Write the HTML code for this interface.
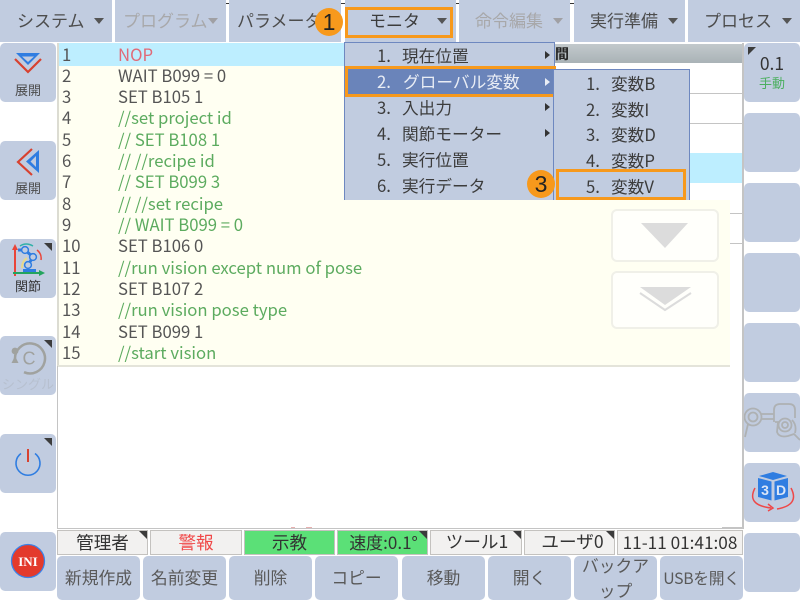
<!DOCTYPE html>
<html lang="ja"><head><meta charset="utf-8"><style>
html,body{margin:0;padding:0;background:#fff}
#r{position:relative;width:802px;height:600px;overflow:hidden;background:#fff;font-family:"Noto Sans CJK JP","Liberation Sans",sans-serif;color:#4c4c4c;font-size:17px;filter:blur(.35px)}
#r div,#r svg{position:absolute}
.b{background:#c1cce0;border-radius:5px;text-align:center;box-sizing:border-box}
.t{background:#c1cce0;height:42px;top:0;line-height:40px;box-sizing:border-box;white-space:nowrap}
.t span{position:absolute;top:0;white-space:nowrap}
.ar{width:0;height:0;border-left:5px solid transparent;border-right:5px solid transparent;border-top:6px solid #555;top:18px}
.n{left:62px;width:40px;height:21px;line-height:21px;font-size:16.7px;color:#555}
.c{left:118px;width:300px;height:21px;line-height:21px;font-size:16.7px;white-space:nowrap;color:#555}
.g{color:#5cab5f}
.m{left:344px;width:210px;height:26px;line-height:26px;color:#3c3c3c;white-space:nowrap;font-size:16.7px}
.m span{position:absolute;top:0;white-space:nowrap}
.ra{left:201px;top:9px;width:0;height:0;border-top:4px solid transparent;border-bottom:4px solid transparent;border-left:5px solid #333}
.s{top:530px;height:25px;line-height:23px;background:#f2f1f0;border:1px solid #c4c2bf;box-sizing:border-box;text-align:center;font-size:17.6px;color:#333;white-space:nowrap}
.gr{background:#5be077}
.f{top:556px;height:44px;line-height:43px;background:#c1cce0;border-radius:5px;text-align:center;color:#595959;font-size:16.8px;white-space:nowrap}
.cn{width:0;height:0;border-top:8px solid #3c3c3c;border-left:8px solid transparent;right:0;top:0}
.cl{width:0;height:0;border-top:8px solid #3c3c3c;border-right:8px solid transparent;left:4px;top:4px}
.o{width:28px;height:28px;border-radius:50%;background:#f7991c;color:#222;font-family:"Liberation Sans",sans-serif;font-size:23px;line-height:28px;text-align:center}
.l{height:1px;background:#c4c4c4}
.sl{left:0;width:56px;line-height:20px;font-size:13px}
</style></head><body><div id="r">

<div style="left:216px;top:0;width:367px;height:4px;background:#fff;border:1px solid #333;border-top:0;box-sizing:border-box"></div>
<div style="left:472px;top:0;width:1px;height:3px;background:#333"></div>

<div class="t" style="left:0;width:112px"><span style="left:17px">システム</span><div class="ar" style="left:94px"></div></div>
<div class="t" style="left:115px;width:111px;color:#a8a8aa"><span style="left:8px">プログラム</span><div class="ar" style="left:93px;border-top-color:#a0a0a4"></div></div>
<div class="t" style="left:229px;width:112px"><span style="left:8px">パラメータ</span></div>
<div class="t" style="left:345px;width:111px;color:#3c3c3c"><span style="left:24px">モニタ</span><div class="ar" style="left:92px"></div></div>
<div style="left:345px;top:7px;width:108px;height:31px;border:3px solid #f7991c;box-sizing:border-box"></div>
<div class="t" style="left:459px;width:111px;color:#a8a8aa"><span style="left:16px">命令編集</span><div class="ar" style="left:94px;border-top-color:#a0a0a4"></div></div>
<div class="t" style="left:574px;width:111px"><span style="left:16px">実行準備</span><div class="ar" style="left:94px"></div></div>
<div class="t" style="left:688px;width:112px"><span style="left:16px">プロセス</span><div class="ar" style="left:94px"></div></div>

<!-- editor -->
<div style="left:58px;top:43px;width:290px;height:160px;background:#fffff2"></div>
<div style="left:58px;top:200px;width:672px;height:166px;background:#fffff2"></div>
<div style="left:58px;top:43px;width:288px;height:23px;background:#bdeeff"></div>
<div style="left:57px;top:43px;width:2px;height:323px;background:#dcdcd2"></div>
<div style="left:58px;top:365px;width:672px;height:2px;background:#e4e4da"></div>
<div style="left:57px;top:366px;width:1px;height:163px;background:#c4c4c4"></div>
<div style="left:742px;top:43px;width:2px;height:486px;background:#c4c4c4"></div>
<div style="left:57px;top:528px;width:686px;height:1px;background:#c4c4c4"></div>
<div style="left:722px;top:527px;width:21px;height:1px;background:#c4c4c4"></div>
<div style="left:291px;top:527px;width:4px;height:1px;background:#e8b0b0"></div>
<div style="left:306px;top:527px;width:6px;height:1px;background:#e8b0b0"></div>

<!-- back panel -->
<div style="left:554px;top:44px;width:188px;height:19px;background:linear-gradient(#c2c9cc,#a9b2b6)"></div>
<div style="left:555px;top:44px;width:16px;height:20px;line-height:20px;font-size:14px;color:#222;font-weight:bold">間</div>
<div class="l" style="left:554px;top:93px;width:188px"></div>
<div class="l" style="left:554px;top:123px;width:188px"></div>
<div style="left:554px;top:153px;width:188px;height:30px;background:#bdeeff"></div>
<div class="l" style="left:730px;top:213px;width:12px"></div>
<div class="l" style="left:730px;top:243px;width:12px"></div>

<div class="n" style="top:43.5px">1</div><div class="c" style="top:43.5px;color:#e06a78">NOP</div>
<div class="n" style="top:64.5px">2</div><div class="c" style="top:64.5px">WAIT B099 = 0</div>
<div class="n" style="top:86px">3</div><div class="c" style="top:86px">SET B105 1</div>
<div class="n" style="top:107px">4</div><div class="c g" style="top:107px">//set project id</div>
<div class="n" style="top:129px">5</div><div class="c g" style="top:129px">// SET B108 1</div>
<div class="n" style="top:150px">6</div><div class="c g" style="top:150px">// //recipe id</div>
<div class="n" style="top:171px">7</div><div class="c g" style="top:171px">// SET B099 3</div>
<div class="n" style="top:193px">8</div><div class="c g" style="top:193px">// //set recipe</div>
<div class="n" style="top:214px">9</div><div class="c g" style="top:214px">// WAIT B099 = 0</div>
<div class="n" style="top:235px">10</div><div class="c" style="top:235px">SET B106 0</div>
<div class="n" style="top:257px">11</div><div class="c g" style="top:257px">//run vision except num of pose</div>
<div class="n" style="top:278px">12</div><div class="c" style="top:278px">SET B107 2</div>
<div class="n" style="top:299px">13</div><div class="c g" style="top:299px">//run vision pose type</div>
<div class="n" style="top:321px">14</div><div class="c" style="top:321px">SET B099 1</div>
<div class="n" style="top:342px">15</div><div class="c g" style="top:342px">//start vision</div>

<!-- faded arrow buttons -->
<svg style="left:610px;top:208px" width="110" height="122" viewBox="0 0 110 122">
<rect x="2" y="2" width="106" height="51" rx="5" fill="#fffffb" stroke="#f0f0e8" stroke-width="2"/>
<path d="M31 15H78L55 40Z" fill="#dcdcdc"/>
<rect x="2" y="64" width="106" height="56" rx="5" fill="#fffffb" stroke="#f0f0e8" stroke-width="2"/>
<path d="M30 79H81L55 97Z" fill="#dcdcdc"/>
<path d="M30 85L55 102L81 85" fill="none" stroke="#dcdcdc" stroke-width="2"/>
</svg>

<!-- menu -->
<div style="left:344px;top:42px;width:211px;height:158px;background:#c1cce0;border:1px solid #6e88c0;border-bottom:0;box-sizing:border-box"></div>
<div class="m" style="top:42px"><span style="left:33px">1.</span><span style="left:58px">現在位置</span><div class="ra"></div></div>
<div class="m" style="top:66px;left:345px;width:211px;height:31px;background:#6a84ba;border:3px solid #f7991c;box-sizing:border-box;color:#e9edf5;line-height:25px"><span style="left:29px">2.</span><span style="left:55px">グローバル変数</span><div class="ra" style="left:197px;top:9px;border-left-color:#e9edf5"></div></div>
<div class="m" style="top:94px"><span style="left:33px">3.</span><span style="left:58px">入出力</span><div class="ra"></div></div>
<div class="m" style="top:120px"><span style="left:33px">4.</span><span style="left:58px">関節モーター</span><div class="ra"></div></div>
<div class="m" style="top:146px"><span style="left:33px">5.</span><span style="left:58px">実行位置</span></div>
<div class="m" style="top:172px"><span style="left:33px">6.</span><span style="left:58px">実行データ</span></div>

<!-- submenu -->
<div style="left:553px;top:69px;width:137px;height:131px;background:#c1cce0;border:1px solid #6e88c0;border-bottom:0;box-sizing:border-box"></div>
<div class="m" style="top:70px;left:553px;width:130px"><span style="left:33px">1.</span><span style="left:58px">変数B</span></div>
<div class="m" style="top:95.5px;left:553px;width:130px"><span style="left:33px">2.</span><span style="left:58px">変数I</span></div>
<div class="m" style="top:121px;left:553px;width:130px"><span style="left:33px">3.</span><span style="left:58px">変数D</span></div>
<div class="m" style="top:147px;left:553px;width:130px"><span style="left:33px">4.</span><span style="left:58px">変数P</span></div>
<div class="m" style="top:173px;left:553px;width:130px"><span style="left:33px">5.</span><span style="left:58px">変数V</span></div>
<div style="left:556px;top:169px;width:130px;height:31px;border:3px solid #f7991c;box-sizing:border-box"></div>

<!-- badges -->
<div class="o" style="left:315px;top:8px">1</div>
<div class="o" style="left:527px;top:170px">3</div>

<!-- left buttons -->
<div class="b" style="left:0;top:43px;width:56px;height:59px"><svg style="left:14px;top:9px" width="28" height="24" viewBox="0 0 28 24"><path d="M2 1H26L14 13Z M8 4.5L14 10L20 4.5Z" fill="#2f7de1" fill-rule="evenodd"/><path d="M1 7L14 20L27 7" fill="none" stroke="#d8412f" stroke-width="2.2"/></svg><div class="sl" style="top:37px">展開</div></div>
<div class="b" style="left:0;top:141px;width:56px;height:59px"><svg style="left:16px;top:6px" width="26" height="30" viewBox="0 0 26 30"><path d="M23 3V26L10 14.5Z M20 9L14.5 14.5L20 20Z" fill="#2f7de1" fill-rule="evenodd"/><path d="M16 2L2 15L16 28" fill="none" stroke="#d8412f" stroke-width="2.2"/></svg><div class="sl" style="top:37px">展開</div></div>
<div class="b" style="left:0;top:239px;width:56px;height:59px"><div class="cn" style="right:4px;top:4px"></div>
<svg style="left:11px;top:3px" width="36" height="36" viewBox="0 0 36 36">
<path d="M4 34V6" stroke="#e9453a" stroke-width="2" fill="none"/><path d="M1 8L4 2L7 8Z" fill="#e9453a"/>
<path d="M2 31H29" stroke="#23a45e" stroke-width="2" fill="none"/><path d="M28 28L34 31L28 34Z" fill="#23a45e"/>
<path d="M12 30H25V27H12Z" fill="#2f7de1"/>
<path d="M17 23L22 15L14 8H7" stroke="#2f7de1" stroke-width="3" fill="none"/>
<circle cx="17" cy="23" r="3.4" fill="#c1cce0" stroke="#2f7de1" stroke-width="1.5"/><circle cx="22" cy="15" r="3.4" fill="#c1cce0" stroke="#2f7de1" stroke-width="1.5"/><circle cx="14" cy="8" r="3.4" fill="#c1cce0" stroke="#2f7de1" stroke-width="1.5"/>
<path d="M9 4Q15 0 22 4" stroke="#31b1a8" stroke-width="1.5" fill="none"/>
<path d="M26 8Q31 12 30 18" stroke="#e9453a" stroke-width="1.5" fill="none"/>
<path d="M11 26Q11 19 16 16" stroke="#e8d98a" stroke-width="2" fill="none"/>
</svg><div class="sl" style="top:37px;color:#333">関節</div></div>
<div class="b" style="left:0;top:336px;width:56px;height:59px"><div class="cn" style="right:4px;top:4px"></div>
<svg style="left:11px;top:4px" width="36" height="36" viewBox="0 0 36 36"><path d="M4 19A15 15 0 1 1 13 32.2" fill="none" stroke="#a0a29f" stroke-width="2.5"/><path d="M4 16L0.5 23H7.5Z" fill="#a0a29f"/><circle cx="4" cy="11" r="3.4" fill="#a0a29f"/><text x="18" y="24.5" font-family="Liberation Sans,sans-serif" font-size="18" text-anchor="middle" fill="#a0a29f">C</text></svg>
<div class="sl" style="top:40px;line-height:16px;color:#b7c0cf">シングル</div></div>
<div class="b" style="left:0;top:434px;width:56px;height:59px"><svg style="left:14px;top:12px" width="28" height="32" viewBox="0 0 28 32"><path d="M7 7.5A12 12 0 1 0 21 7.5" fill="none" stroke="#2f7de1" stroke-width="1.6"/><path d="M14 3V16" stroke="#d8412f" stroke-width="2"/></svg><div class="cn" style="right:4px;top:4px"></div></div>
<div class="b" style="left:0;top:532px;width:56px;height:59px"><svg style="left:10px;top:11px" width="36" height="36" viewBox="0 0 36 36"><circle cx="18" cy="18" r="16.5" fill="#e33a2c" stroke="#3b82e8" stroke-width="1.3"/><text x="18" y="23" text-anchor="middle" font-family="Liberation Serif,serif" font-weight="bold" font-size="13" fill="#fff">INI</text></svg></div>

<!-- right buttons -->
<div class="b" style="left:744px;top:43px;width:56px;height:59px"><div class="cl"></div><div style="left:0;width:56px;top:9px;line-height:24px;font-size:17.5px;color:#333">0.1</div><div style="left:0;width:56px;top:32px;line-height:16px;font-size:13px;color:#4caf60">手動</div></div>
<div class="b" style="left:744px;top:113px;width:56px;height:59px"></div>
<div class="b" style="left:744px;top:183px;width:56px;height:59px"></div>
<div class="b" style="left:744px;top:253px;width:56px;height:59px"></div>
<div class="b" style="left:744px;top:323px;width:56px;height:59px"></div>
<div class="b" style="left:744px;top:393px;width:56px;height:59px;overflow:hidden"><svg style="left:0;top:5px" width="56" height="46" viewBox="0 0 56 46" fill="none" stroke="#aeb1b3" stroke-width="1.8"><circle cx="9" cy="19" r="8.5"/><circle cx="9" cy="19" r="4.5"/><path d="M17 16H30M17 21H30"/><path d="M4 26L1 39"/><circle cx="41" cy="27" r="6.5"/><circle cx="41" cy="27" r="3"/><path d="M30 24V12Q30 6 36 6H45Q51 6 51 12V20"/><path d="M31 24H34L33 34Q35 40 44 38L50 36L56 42M48 22Q53 27 51 35"/></svg></div>
<div class="b" style="left:744px;top:463px;width:56px;height:59px"><svg style="left:6px;top:8px" width="46" height="42" viewBox="0 0 46 42"><path d="M23 1L37 5L23 9L9 5Z" fill="#2f7de1"/><path d="M8 7L21.5 10.5V29.5L8 26Z M24.5 10.5L38 7V26L24.5 29.5Z" fill="#2f7de1"/><text x="15" y="24" text-anchor="middle" font-family="Liberation Sans,sans-serif" font-weight="bold" font-size="14" fill="#dbe6f7">3</text><text x="31" y="24" text-anchor="middle" font-family="Liberation Sans,sans-serif" font-weight="bold" font-size="14" fill="#dbe6f7">D</text><path d="M5 17Q-4 34 21 37M41 17Q50 34 27 38" fill="none" stroke="#ee4848" stroke-width="1.5"/><path d="M18 33L23 37L18 40" fill="none" stroke="#ee4848" stroke-width="1.5"/></svg></div>
<div class="b" style="left:744px;top:533px;width:56px;height:59px"></div>

<!-- status -->
<div class="s" style="left:57px;width:91px">管理者<div class="cn"></div></div>
<div class="s" style="left:150px;width:92px;color:#f04848">警報</div>
<div class="s gr" style="left:244px;width:91px">示教</div>
<div class="s gr" style="left:337px;width:91px;font-size:17px;line-height:21px;padding-left:2px">速度:0.1°<div class="cn"></div></div>
<div class="s" style="left:430px;width:92px;line-height:22px;padding-left:2px">ツール1<div class="cn"></div></div>
<div class="s" style="left:524px;width:91px;line-height:22px;padding-left:6px">ユーザ0<div class="cn"></div></div>
<div class="s" style="left:617px;width:126px;font-size:17.2px;line-height:21px">11-11 01:41:08</div>

<!-- footer -->
<div class="f" style="left:57px;width:83px">新規作成</div>
<div class="f" style="left:143px;width:83px">名前変更</div>
<div class="f" style="left:229px;width:83px">削除</div>
<div class="f" style="left:315px;width:83px">コピー</div>
<div class="f" style="left:402px;width:83px">移動</div>
<div class="f" style="left:488px;width:83px">開く</div>
<div class="f" style="left:574px;width:83px;overflow:hidden"><div style="left:0;top:-3px;width:83px;line-height:25px">バックア<br>ップ</div></div>
<div class="f" style="left:660px;width:83px;font-size:15.8px;letter-spacing:-.3px">USBを開く</div>

</div></body></html>
